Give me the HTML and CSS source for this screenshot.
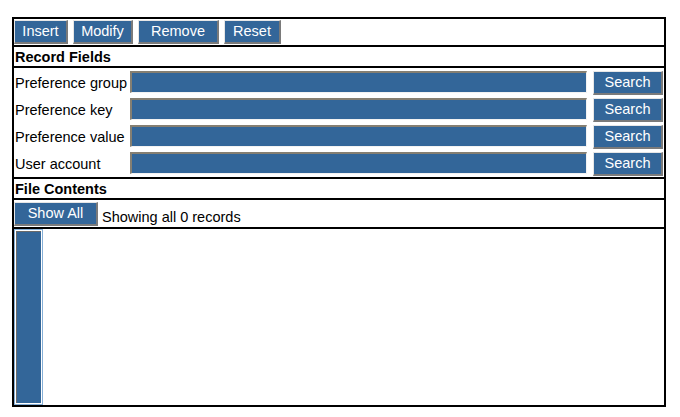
FILE: index.html
```html
<!DOCTYPE html>
<html>
<head>
<meta charset="utf-8">
<link rel="stylesheet" href="styles.css">
</head>
<body>
<div class="panel">
  <div class="row toolbar">
    <button class="btn w-insert">Insert</button>
    <button class="btn w-modify">Modify</button>
    <button class="btn w-remove">Remove</button>
    <button class="btn w-reset">Reset</button>
  </div>
  <div class="row heading">Record Fields</div>
  <div class="row fields">
    <div class="field"><span class="label">Preference group</span><span class="input"></span><button class="btn w-search">Search</button></div>
    <div class="field"><span class="label">Preference key</span><span class="input"></span><button class="btn w-search">Search</button></div>
    <div class="field"><span class="label">Preference value</span><span class="input"></span><button class="btn w-search">Search</button></div>
    <div class="field"><span class="label">User account</span><span class="input"></span><button class="btn w-search">Search</button></div>
  </div>
  <div class="row heading">File Contents</div>
  <div class="row showbar">
    <button class="btn w-show">Show All</button>
    <span class="status">Showing all 0 records</span>
  </div>
  <div class="contents">
    <div class="listbox"><div class="listinner"></div></div>
  </div>
</div>
</body>
</html>
```
FILE: styles.css
```css
html, body {
  margin: 0;
  padding: 0;
  background: #ffffff;
}
body {
  font-family: "Liberation Sans", Arial, sans-serif;
  font-size: 14.5px;
  color: #000;
}
.panel {
  margin: 17px 0 0 12px;
  width: 650px;
  border: 2px solid #000;
}
.row {
  border-bottom: 2px solid #000;
}
.toolbar {
  display: flex;
  gap: 5px;
  height: 25px;
  align-items: flex-start;
  padding-top: 1px;
}
.btn {
  box-sizing: border-box;
  height: 24px;
  margin: 0;
  padding: 0 0 1px 0;
  background: #336699;
  color: #ffffff;
  font-family: "Liberation Sans", Arial, sans-serif;
  font-size: 14.5px;
  line-height: 18px;
  border-style: solid;
  border-width: 1px 2px 2px 1px;
  border-color: #e6e6e6 #7a7a7a #7a7a7a #e6e6e6;
  text-align: center;
}
.w-insert { width: 54px; }
.w-modify { width: 60px; }
.w-remove { width: 81px; }
.w-reset { width: 57px; }
.w-search { width: 70px; margin-left: 6px; }
.w-show { width: 84px; }
.heading {
  font-weight: bold;
  height: 19px;
  line-height: 20px;
  padding-left: 1px;
}
.fields {
  display: flex;
  flex-direction: column;
  padding-top: 1px;
  height: 108px;
}
.field {
  display: flex;
  align-items: center;
  height: 27px;
}
.label {
  width: 116px;
  padding-left: 1px;
  box-sizing: border-box;
  white-space: nowrap;
}
.input {
  box-sizing: border-box;
  width: 457px;
  height: 22px;
  margin-top: -1px;
  background: #336699;
  border-style: solid;
  border-width: 2px 1px 1px 2px;
  border-color: #857f72 #f2f2f2 #f2f2f2 #857f72;
}
.showbar {
  display: flex;
  align-items: flex-start;
  height: 25px;
  padding-top: 2px;
}
.status {
  margin-left: 4px;
  padding-top: 7px;
  line-height: 16px;
}
.contents {
  height: 176px;
}
.listbox {
  box-sizing: border-box;
  width: 29px;
  height: 176px;
  border: 1px solid #86afd6;
  padding: 1px;
  background: #fff;
}
.listinner {
  box-sizing: border-box;
  height: 100%;
  background: #336699;
  border-left: 1px solid #6a6a6a;
  border-top: 1px solid #6a6a6a;
}
```
